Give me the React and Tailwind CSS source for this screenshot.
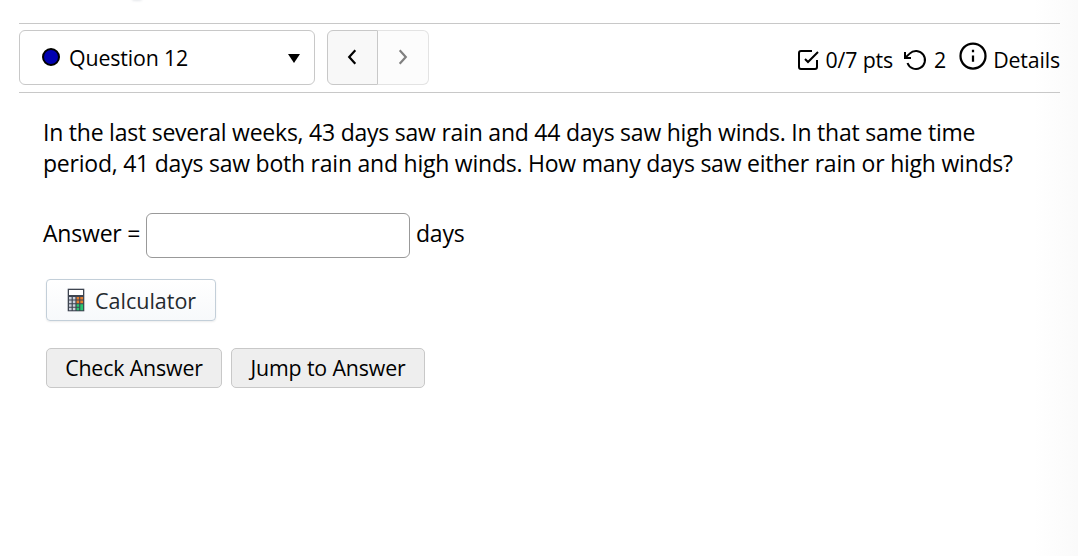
import React, { useState } from "react";

const CheckSquare = () => (
  <svg className="w-6 h-6" viewBox="0 0 24 24" fill="none" stroke="currentColor" strokeWidth="2">
    <polyline points="9 11 12 14 22 4" />
    <path d="M21 12v7a2 2 0 0 1-2 2H5a2 2 0 0 1-2-2V5a2 2 0 0 1 2-2h11" />
  </svg>
);

const Retry = () => (
  <svg className="w-6 h-6" viewBox="0 0 24 24" fill="none" stroke="currentColor" strokeWidth="2">
    <polyline points="1 4 1 10 7 10" />
    <path d="M3.51 15a9 9 0 1 0 2.13-9.36L1 10" />
  </svg>
);

const Info = () => (
  <svg className="w-[30px] h-[30px]" viewBox="0 0 24 24" fill="none" stroke="currentColor" strokeWidth="1.8">
    <circle cx="12" cy="12" r="10" />
    <path d="M12 16.5v-5M12 9V7" />
  </svg>
);

const CalculatorIcon = () => (
  <svg className="w-[18px] h-6" viewBox="0 0 18 24">
    <rect x="0.7" y="0.7" width="16.6" height="22.6" fill="#3d4450" />
    <rect x="2" y="2" width="14" height="5" fill="#fff" />
    <path d="M2 9h2.6v2.6H2zM5.8 9h2.6v2.6H5.8zM2 12.6h2.6v2.6H2zM5.8 12.6h2.6v2.6H5.8zM2 16.2h2.6v2.6H2zM5.8 16.2h2.6v2.6H5.8zM2 19.8h2.6v2.4H2zM5.8 19.8h2.6v2.4H5.8z" fill="#cbd0dc" />
    <path d="M9.6 9h2.6v2.6H9.6zM13.3 9h2.8v2.6h-2.8zM9.6 12.6h2.6v2.6H9.6zM13.3 12.6h2.8v2.6h-2.8z" fill="#e67e30" />
    <path d="M9.6 16.2h2.6v2.6H9.6zM9.6 19.8h2.6v2.4H9.6zM13.3 16.2h2.8v6h-2.8z" fill="#28c76f" />
  </svg>
);

const App = () => {
  const [answer, setAnswer] = useState("");

  return (
    <div className="relative h-[556px] overflow-hidden bg-white pt-[23px] font-['Open_Sans',sans-serif] text-black">
      {/* Soft edges of the page */}
      <div className="absolute right-0 top-0 h-full w-11 bg-linear-to-r from-white to-[#fafafa]" />
      <div className="absolute left-[132px] -top-1 h-[5px] w-2.5 rounded-full bg-gray-200 blur-[1px]" />

      <header className="relative mx-[19px] mr-[18px] flex h-[70px] items-start justify-between border-y border-[#c8c8c8] pt-1.5 text-[21.33px] tracking-[-0.14px]">
        <div className="flex">
          <button className="flex h-[55px] w-[296px] items-center rounded-md border border-[#c8c8c8] bg-white pl-[22px] pr-3.5">
            <span className="mb-0.5 h-[18px] w-[18px] rounded-full border-2 border-black bg-[#0000b0]" />
            <span className="ml-[9px]">Question 12</span>
            <svg className="ml-auto mt-0.5 h-[9px] w-3" viewBox="0 0 12 9">
              <path d="M0 0h12L6 9z" />
            </svg>
          </button>
          <div className="ml-3 flex">
            <button className="flex h-[55px] w-[51px] items-center justify-center rounded-l-md border border-[#c8c8c8] bg-[#f8f8f8] pr-0.5 pb-0.5">
              <svg className="h-4 w-2.5" viewBox="0 0 10 16" fill="none" stroke="currentColor" strokeWidth="2.2">
                <path d="M8.3 1.2 2.2 8l6.1 6.8" />
              </svg>
            </button>
            <button disabled className="flex h-[55px] w-[51px] items-center justify-center rounded-r-md border border-l-0 border-[#e3e3e3] bg-[#fcfcfc] pb-0.5 text-[#808080]">
              <svg className="h-4 w-2.5" viewBox="0 0 10 16" fill="none" stroke="currentColor" strokeWidth="2.2">
                <path d="m1.7 1.2 6.1 6.8-6.1 6.8" />
              </svg>
            </button>
          </div>
        </div>

        <div className="flex h-[58px] items-center pt-0.5">
          <CheckSquare />
          <span className="ml-[5px]">0/7 pts</span>
          <span className="ml-[11px]"><Retry /></span>
          <span className="ml-1.5">2</span>
          <span className="mb-2 ml-3"><Info /></span>
          <span className="ml-[5px]">Details</span>
        </div>
      </header>

      <main className="relative ml-[43px] mt-6">
        <p className="w-[1000px] text-[23px] leading-[31px] tracking-[-0.23px]">
          In the last several weeks, 43 days saw rain and 44 days saw high winds. In that same time
          <br />
          period, 41 days saw both rain and high winds. How many days saw either rain or high winds?
        </p>

        <div className="mt-[34px] flex items-center text-[23px] tracking-[-0.2px]">
          <label htmlFor="answer" className="-mt-1 w-[97px] whitespace-nowrap">Answer =</label>
          <input
            id="answer"
            value={answer}
            onChange={(e) => setAnswer(e.target.value)}
            className="ml-1.5 h-[45px] w-[264px] rounded-md border border-[#999] bg-white px-2 outline-none"
          />
          <span className="-mt-1 ml-1.5">days</span>
        </div>

        <button className="ml-[3px] mt-[21px] flex h-[42px] w-[170px] items-center rounded border border-[#c3cfd9] bg-linear-to-b from-white to-[#f7f9fb] pl-5 text-[21.5px] text-[#24292e] shadow-[0_1px_2px_rgba(0,0,0,0.08)]">
          <CalculatorIcon />
          <span className="ml-2.5 mt-0.5">Calculator</span>
        </button>

        <div className="ml-[3px] mt-[27px] flex gap-[9px] text-[21.33px] tracking-[-0.14px]">
          <button className="h-10 w-44 rounded-[5px] border border-[#c8c8c8] bg-[#eee]">Check Answer</button>
          <button className="h-10 w-[194px] rounded-[5px] border border-[#c8c8c8] bg-[#eee]">Jump to Answer</button>
        </div>
      </main>
    </div>
  );
};

export default App;
